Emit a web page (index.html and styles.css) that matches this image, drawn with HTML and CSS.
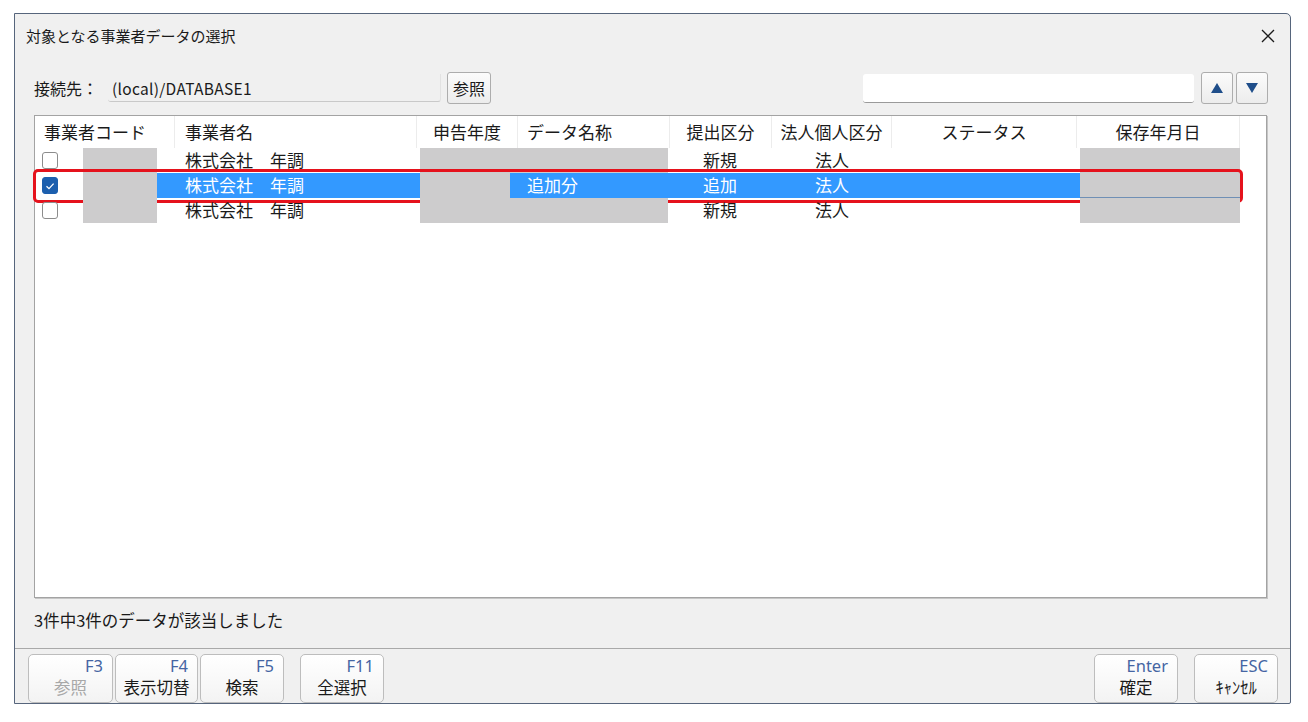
FILE: index.html
```html
<!DOCTYPE html>
<html lang="ja">
<head>
<meta charset="utf-8">
<title>対象となる事業者データの選択</title>
<link rel="stylesheet" href="styles.css">
</head>
<body>
<div class="window">
  <div class="titlebar">
    <span class="title">対象となる事業者データの選択</span>
    <span class="close">
      <svg width="14" height="14" viewBox="0 0 14 14"><path d="M1 1 L13 13 M13 1 L1 13" stroke="#1a1a1a" stroke-width="1.3" fill="none"/></svg>
    </span>
  </div>

  <div class="conn-row">
    <span class="conn-label">接続先：</span>
    <div class="conn-field">(local)/DATABASE1</div>
    <button class="btn ref-btn">参照</button>
    <div class="spacer"></div>
    <div class="search-field"></div>
    <button class="btn arrow-btn">
      <svg width="14" height="12" viewBox="0 0 14 12"><path d="M7 1 L13 11 L1 11 Z" fill="#1f4e8a"/></svg>
    </button>
    <button class="btn arrow-btn">
      <svg width="14" height="12" viewBox="0 0 14 12"><path d="M1 1 L13 1 L7 11 Z" fill="#1f4e8a"/></svg>
    </button>
  </div>

  <div class="list">
    <div class="list-header">
      <div class="hcell left">事業者コード</div>
      <div class="hcell left">事業者名</div>
      <div class="hcell">申告年度</div>
      <div class="hcell left">データ名称</div>
      <div class="hcell">提出区分</div>
      <div class="hcell">法人個人区分</div>
      <div class="hcell">ステータス</div>
      <div class="hcell">保存年月日</div>
    </div>

    <div class="row">
      <div class="cell chk-cell"><span class="chk"></span></div>
      <div class="cell gray"></div>
      <div class="cell name">株式会社　年調</div>
      <div class="cell gray"></div>
      <div class="cell gray dname"></div>
      <div class="cell center">新規</div>
      <div class="cell center">法人</div>
      <div class="cell"></div>
      <div class="cell gray"></div>
    </div>

    <div class="row selected">
      <div class="cell chk-cell"><span class="chk checked">
        <svg width="12" height="12" viewBox="0 0 12 12"><path d="M2.5 6.2 L5 8.6 L9.6 3.6" stroke="#fff" stroke-width="1.3" fill="none"/></svg>
      </span></div>
      <div class="cell gray"></div>
      <div class="cell name sel">株式会社　年調</div>
      <div class="cell gray"></div>
      <div class="cell dname sel">追加分</div>
      <div class="cell center sel">追加</div>
      <div class="cell center sel">法人</div>
      <div class="cell sel"></div>
      <div class="cell gray focus"></div>
    </div>

    <div class="row">
      <div class="cell chk-cell"><span class="chk"></span></div>
      <div class="cell gray"></div>
      <div class="cell name">株式会社　年調</div>
      <div class="cell gray"></div>
      <div class="cell gray dname"></div>
      <div class="cell center">新規</div>
      <div class="cell center">法人</div>
      <div class="cell"></div>
      <div class="cell gray"></div>
    </div>
  </div>

  <div class="status">3件中3件のデータが該当しました</div>

  <div class="fkeys">
    <button class="fbtn w85 disabled"><span class="fk">F3</span><span class="fl">参照</span></button>
    <button class="fbtn w83"><span class="fk">F4</span><span class="fl">表示切替</span></button>
    <button class="fbtn w84"><span class="fk">F5</span><span class="fl">検索</span></button>
    <button class="fbtn w84 gap-left"><span class="fk">F11</span><span class="fl">全選択</span></button>
    <div class="spacer"></div>
    <button class="fbtn w84"><span class="fk">Enter</span><span class="fl">確定</span></button>
    <button class="fbtn w84 gap-left"><span class="fk">ESC</span><span class="fl">ｷｬﾝｾﾙ</span></button>
  </div>
</div>
</body>
</html>
```

FILE: styles.css
```css
*, *::before, *::after { box-sizing: border-box; }

html, body {
  margin: 0;
  padding: 0;
  background: #ffffff;
}

body {
  font-family: "Noto Sans CJK JP", "Noto Sans", sans-serif;
  color: #1a1a1a;
  padding: 13px 0 0 14px;
}

.window {
  width: 1277px;
  height: 691px;
  border: 1px solid #56657c;
  border-radius: 0 5px 2px 0;
  background: #f0f0f0;
  display: flex;
  flex-direction: column;
  overflow: hidden;
}

/* title bar */
.titlebar {
  height: 44px;
  display: flex;
  align-items: center;
  padding: 0 15px 0 11px;
}
.title {
  font-size: 15px;
  line-height: 20px;
  flex: 1;
  color: #1a1a1a;
}
.close {
  width: 14px;
  height: 14px;
  display: flex;
}

/* connection row */
.conn-row {
  margin-top: 14px;
  height: 32px;
  display: flex;
  align-items: center;
  padding: 0 22px 0 19px;
}
.conn-label {
  font-size: 16px;
  line-height: 20px;
  width: 74px;
}
.conn-field {
  width: 333px;
  height: 28px;
  border-bottom: 1px solid #c9c9c9;
  border-right: 1px solid #e2e2e2;
  border-radius: 0 0 3px 3px;
  font-size: 15.5px;
  line-height: 28px;
  padding-left: 4px;
  letter-spacing: 0.3px;
}
.btn {
  font-family: inherit;
  border: 1px solid #adadad;
  border-radius: 3px;
  background: linear-gradient(#fbfbfb, #ececec);
  padding: 0;
  margin: 0;
  display: flex;
  align-items: center;
  justify-content: center;
  color: #1a1a1a;
}
.ref-btn {
  width: 44px;
  height: 32px;
  margin-left: 6px;
  font-size: 16px;
  line-height: 20px;
}
.spacer { flex: 1; }
.search-field {
  width: 331px;
  height: 29px;
  background: #ffffff;
  border-bottom: 1px solid #9a9a9a;
  border-radius: 3px;
}
.arrow-btn {
  width: 32px;
  height: 32px;
}
.search-field + .arrow-btn { margin-left: 7px; }
.arrow-btn + .arrow-btn { margin-left: 3px; }

/* list */
.list {
  margin: 11px 23px 0 19px;
  height: 483px;
  border: 1px solid #a3a3a3;
  background: #ffffff;
  box-shadow: 1px 1px 0 #c6c6c6;
}
.list-header {
  display: grid;
  grid-template-columns: 140px 242px 101px 152px 102px 120px 185px 163px;
  height: 32px;
}
.hcell {
  font-size: 17px;
  line-height: 32px;
  text-align: center;
  border-right: 1px solid #ececec;
  white-space: nowrap;
  color: #1a1a1a;
}
.hcell.left {
  text-align: left;
  padding-left: 9px;
}
.hcell:nth-child(2) { padding-left: 10px; }

.row {
  display: grid;
  grid-template-columns: 48px 74px 263px 90px 158px 104px 120px 188px 160px;
  height: 25px;
  position: relative;
}
.row.selected::after {
  content: "";
  position: absolute;
  left: -2px;
  top: -4px;
  width: 1210px;
  height: 34px;
  border: 3px solid #e5121c;
  border-radius: 5px;
  pointer-events: none;
}
.cell {
  font-size: 17px;
  line-height: 24px;
  white-space: nowrap;
  color: #1a1a1a;
}
.cell.gray { background: #cdcccd; }
.cell.sel { background: #3399ff; color: #ffffff; }
.cell.focus { border-bottom: 1px solid #6f8fb5; }
.cell.name { padding-left: 28px; }
.cell.dname { padding-left: 17px; }
.cell.center { text-align: center; }

.chk-cell {
  display: flex;
  align-items: center;
  padding-left: 7px;
}
.chk {
  width: 16px;
  height: 17px;
  border: 1px solid #8c8c8c;
  border-radius: 3px;
  background: #ffffff;
  display: flex;
  align-items: center;
  justify-content: center;
}
.chk.checked {
  background: #1c5fae;
  border-color: #1c5fae;
}

/* status */
.status {
  height: 51px;
  font-size: 16.5px;
  line-height: 20px;
  padding: 12px 0 0 19px;
  border-bottom: 1px solid #a9a9a9;
}

/* function keys */
.fkeys {
  display: flex;
  padding: 5px 12px 0 13px;
  gap: 2px;
  height: 53px;
}
.fbtn {
  height: 49px;
  font-family: inherit;
  border: 1px solid #bdbdbd;
  border-radius: 5px;
  background: linear-gradient(#ffffff, #f3f3f3);
  padding: 1px 9px 0 4px;
  margin: 0;
  display: flex;
  flex-direction: column;
  align-items: stretch;
}
.w85 { width: 85px; }
.w83 { width: 83px; }
.w84 { width: 84px; }
.gap-left { margin-left: 14px; }
.fk {
  font-family: "Noto Sans", "Open Sans", sans-serif;
  font-size: 16.5px;
  line-height: 19px;
  height: 19px;
  color: #4565a3;
  text-align: right;
  white-space: nowrap;
}
.fl {
  font-size: 16.5px;
  line-height: 24px;
  height: 24px;
  color: #1a1a1a;
  white-space: nowrap;
  margin-right: -5px;
  display: flex;
  justify-content: center;
}
.fbtn.disabled .fl { color: #a8a8a8; }
```
